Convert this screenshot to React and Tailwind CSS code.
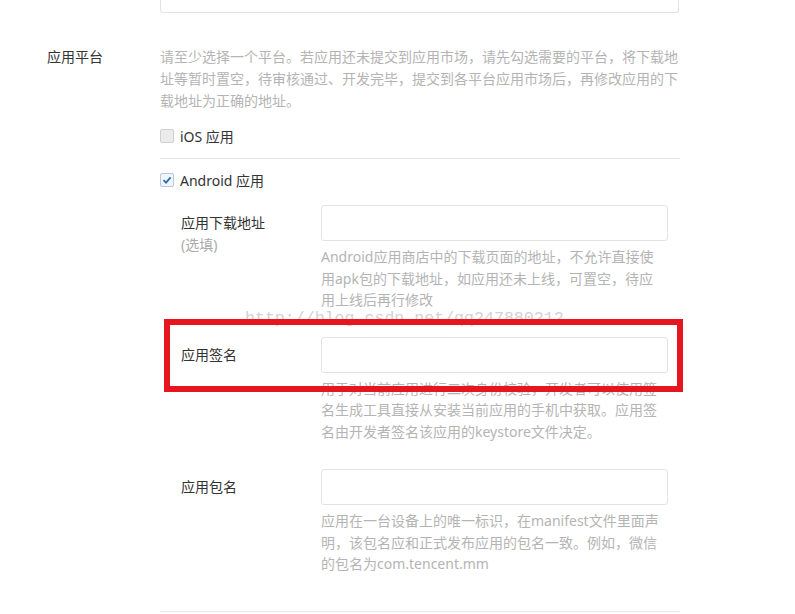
import React from 'react';

const font = { fontFamily: '"Noto Sans", "Noto Sans CJK SC", sans-serif' };

const Checkbox = ({ checked }) => (
    <span
        className={`w-[14px] h-[14px] border rounded-[2px] flex items-center justify-center ${checked ? 'border-[#b8c8d8] bg-[#eef5fc]' : 'border-[#cfcfcf] bg-[#ebebeb]'}`}
    >
        {checked && (
            <svg width="10" height="10" viewBox="0 0 10 10">
                <path d="M1.5 5.2 L4 7.6 L8.6 2.4" fill="none" stroke="#2b6cb0" strokeWidth="1.8" />
            </svg>
        )}
    </span>
);

const SubField = ({ label, hint, lines, className = '' }) => (
    <div className={`flex ${className}`}>
        <div className="ml-[21px] w-[140px] pt-[8px]">
            <div className="text-[14px] leading-5 text-[#333]">{label}</div>
            {hint && <div className="text-[14px] leading-5 mt-[2px] text-[#aaa]">{hint}</div>}
        </div>
        <div className="w-[347px]">
            <div className="h-[36px] border border-[#e3e3e3] rounded-[3px] bg-white" />
            <div className="mt-[5px] text-[14px] leading-[21.5px] text-[#b4b4b4]">
                {lines.map((l, i) => (
                    <div key={i} className="whitespace-nowrap">{l}</div>
                ))}
            </div>
        </div>
    </div>
);

export default function App() {
    return (
        <div className="relative w-[795px] h-[614px] bg-white overflow-hidden" style={font}>
            <div className="ml-[160px] w-[519px] h-[13px] border border-t-0 border-[#e3e3e3] rounded-b-[3px]" />

            <div className="flex mt-[33px]">
                <div className="w-[160px] pl-[47px] text-[14px] leading-[22px] text-[#333]">应用平台</div>
                <div className="w-[520px]">
                    <div className="text-[14px] leading-[22px] text-[#b4b4b4]">
                        <div className="whitespace-nowrap">请至少选择一个平台。若应用还未提交到应用市场，请先勾选需要的平台，将下载地</div>
                        <div className="whitespace-nowrap">址等暂时置空，待审核通过、开发完毕，提交到各平台应用市场后，再修改应用的下</div>
                        <div className="whitespace-nowrap">载地址为正确的地址。</div>
                    </div>

                    <div className="mt-[12px] pb-[10px] border-b border-[#e6e6e6]">
                        <div className="h-[24px] flex items-center gap-[6px]">
                            <Checkbox />
                            <span className="text-[14px] text-[#333]">iOS 应用</span>
                        </div>
                    </div>

                    <div className="mt-[9px] h-[24px] flex items-center gap-[6px]">
                        <Checkbox checked />
                        <span className="text-[14px] text-[#333]">Android 应用</span>
                    </div>

                    <SubField
                        className="mt-[13px]"
                        label="应用下载地址"
                        hint="(选填)"
                        lines={[
                            'Android应用商店中的下载页面的地址，不允许直接使',
                            '用apk包的下载地址，如应用还未上线，可置空，待应',
                            '用上线后再行修改',
                        ]}
                    />
                    <SubField
                        className="mt-[26px]"
                        label="应用签名"
                        lines={[
                            '用于对当前应用进行二次身份校验，开发者可以使用签',
                            '名生成工具直接从安装当前应用的手机中获取。应用签',
                            '名由开发者签名该应用的keystore文件决定。',
                        ]}
                    />
                    <SubField
                        className="mt-[27px]"
                        label="应用包名"
                        lines={[
                            '应用在一台设备上的唯一标识，在manifest文件里面声',
                            '明，该包名应和正式发布应用的包名一致。例如，微信',
                            '的包名为com.tencent.mm',
                        ]}
                    />

                    <div className="mt-[36px] border-b border-[#e6e6e6]" />
                </div>
            </div>

            {/* watermark */}
            <div
                className="absolute left-[245px] top-[309px] text-[16.6px] leading-5 text-[#d2d2d2] whitespace-nowrap"
                style={{ fontFamily: '"Liberation Mono", monospace' }}
            >
                http://blog.csdn.net/qq247880212
            </div>

            {/* highlight box */}
            <div className="absolute left-[164px] top-[319px] w-[519px] h-[73px] border-[6px] border-[#e5161f]" />
        </div>
    );
}
